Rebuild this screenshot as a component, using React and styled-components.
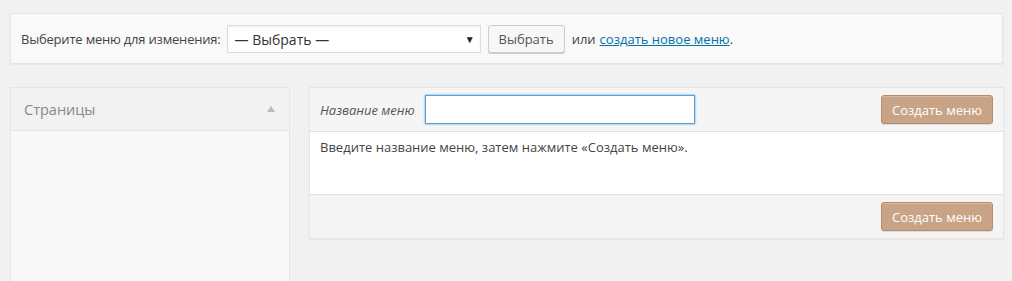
import React from "react"
import styled, { createGlobalStyle } from "styled-components"

const Global = createGlobalStyle`
	body {
		margin: 0;
		background: #f1f1f1;
		font-family: "Open Sans", "Liberation Sans", sans-serif;
		font-size: 13px;
		color: #444;
	}
`

const Page = styled.div`
	padding: 13px 9px 0 10px;
	height: 281px;
	box-sizing: border-box;
	overflow: hidden;
`

const SelectBar = styled.div`
	display: flex;
	align-items: center;
	background: #f9f9f9;
	border: 1px solid #e5e5e5;
	box-shadow: 0 1px 1px rgba(0, 0, 0, 0.04);
	padding: 11px 10px 10px 10px;
	height: 28px;
	box-sizing: content-box;

	label {
		margin-right: 6px;
		letter-spacing: -0.2px;
	}

	a {
		color: #0073aa;
		text-decoration: underline;
		margin-left: 4px;
	}
`

const FakeSelect = styled.div`
	width: 254px;
	height: 28px;
	box-sizing: border-box;
	border: 1px solid #ddd;
	background: #fff;
	display: flex;
	align-items: center;
	justify-content: space-between;
	padding: 0 5px 0 7px;
	font-size: 14px;
	color: #333;
	box-shadow: inset 0 1px 2px rgba(0, 0, 0, 0.07);

	span.arrow {
		font-size: 10px;
		color: #222;
	}
`

const Button = styled.button`
	font-family: inherit;
	font-size: 13px;
	height: ${(p) => (p.$primary ? "29px" : "28px")};
	padding: 0 10px;
	border-radius: 3px;
	cursor: pointer;
	border: 1px solid ${(p) => (p.$primary ? "#b48d6f" : "#ccc")};
	background: ${(p) => (p.$primary ? "#c9a385" : "#f7f7f7")};
	color: ${(p) => (p.$primary ? "#fff" : "#555")};
	box-shadow: ${(p) =>
		p.$primary ? "inset 0 1px 0 rgba(255,255,255,0.25), 0 1px 0 rgba(0,0,0,0.1)" : "0 1px 0 #ccc"};
	margin-left: ${(p) => p.$ml || 0};
	margin-right: ${(p) => p.$mr || 0};
`

const Columns = styled.div`
	display: grid;
	grid-template-columns: 280px 695px;
	column-gap: 19px;
	margin-top: 23px;
	align-items: start;
`

const SidePanel = styled.div`
	background: #f8f8f8;
	border: 1px solid #e5e5e5;
	height: 220px;
`

const SideHeader = styled.div`
	height: 42px;
	background: #f2f2f2;
	border-bottom: 1px solid #e5e5e5;
	display: flex;
	align-items: center;
	justify-content: space-between;
	padding: 0 14px 0 13px;

	h3 {
		margin: 0;
		font-weight: 400;
		font-size: 14.5px;
		color: #888;
	}
`

const Triangle = styled.span`
	width: 0;
	height: 0;
	border-left: 4px solid transparent;
	border-right: 4px solid transparent;
	border-bottom: 6px solid #bbb;
`

const MenuPanel = styled.div`
	border: 1px solid #e5e5e5;
	box-shadow: 0 1px 1px rgba(0, 0, 0, 0.04);
	background: #f5f5f5;
`

const Bar = styled.div`
	display: flex;
	align-items: center;
	height: 43px;
	padding: 0 10px;
	border-${(p) => (p.$top ? "bottom" : "top")}: 1px solid #dfdfdf;
	justify-content: ${(p) => (p.$top ? "space-between" : "flex-end")};
`

const NameField = styled.div`
	display: flex;
	align-items: center;

	label {
		font-style: italic;
		color: #555;
		margin-right: 10px;
	}

	input {
		width: 270px;
		height: 29px;
		box-sizing: border-box;
		border: 1px solid #5b9dd9;
		box-shadow: 0 0 2px rgba(30, 140, 190, 0.8);
		outline: none;
		background: #fff;
		font-family: inherit;
		font-size: 14px;
	}
`

const Body = styled.div`
	background: #fff;
	height: 62px;
	padding: 6px 10px 0;
	box-sizing: border-box;
	color: #444;
`

export default () => {
	return (
		<>
			<Global />
			<Page>
				<SelectBar>
					<label>Выберите меню для изменения:</label>
					<FakeSelect>
						<span>— Выбрать —</span>
						<span className="arrow">▼</span>
					</FakeSelect>
					<Button $ml="7px" $mr="7px">Выбрать</Button>
					<span>
						или<a href="#">создать новое меню</a>.
					</span>
				</SelectBar>
				<Columns>
					<SidePanel>
						<SideHeader>
							<h3>Страницы</h3>
							<Triangle />
						</SideHeader>
					</SidePanel>
					<MenuPanel>
						<Bar $top>
							<NameField>
								<label>Название меню</label>
								<input type="text" />
							</NameField>
							<Button $primary>Создать меню</Button>
						</Bar>
						<Body>Введите название меню, затем нажмите «Создать меню».</Body>
						<Bar>
							<Button $primary>Создать меню</Button>
						</Bar>
					</MenuPanel>
				</Columns>
			</Page>
		</>
	)
}
